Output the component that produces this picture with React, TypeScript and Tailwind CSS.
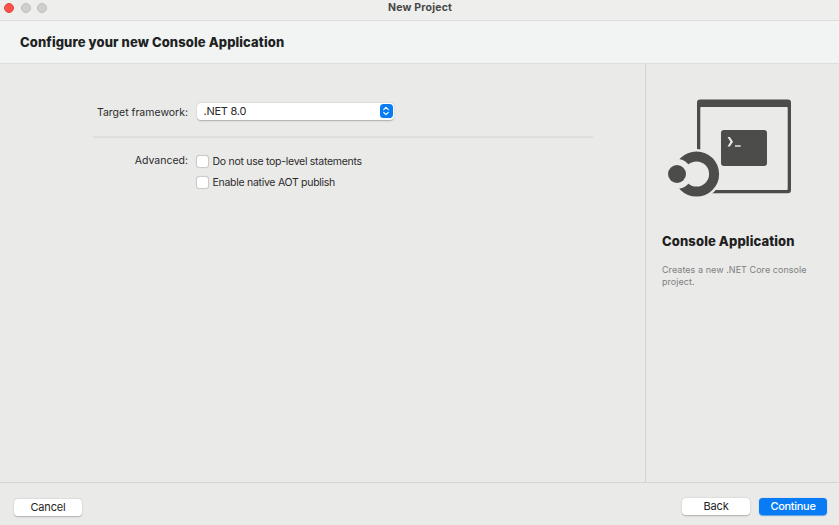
import type { ReactNode } from 'react';

function ConsoleIcon() {
  return (
    <svg className="block h-[125px] w-[193px]" viewBox="0 0 193 125" fill="none">
      <path
        fillRule="evenodd"
        fill="#4c4d4b"
        d="M54 14.5H142Q145 14.5 145 17.5V105.3Q145 108.3 142 108.3H54Q51 108.3 51 105.3V17.5Q51 14.5 54 14.5ZM55.3 22Q54.3 22 54.3 23V104Q54.3 105 55.3 105H140.7Q141.7 105 141.7 104V23Q141.7 22 140.7 22Z"
      />
      <rect x="75" y="45" width="46" height="36" rx="3" fill="#4c4d4b" />
      <path d="M81.5 52H83.8L87 56.8L83.8 61.6H81.5L84.5 56.8Z" fill="#ededeb" />
      <path d="M89 61H94.7" stroke="#ededeb" strokeWidth="1.4" />
      <circle cx="50.5" cy="89" r="25" fill="#eaeae9" />
      <circle cx="50.5" cy="89" r="17.6" stroke="#4c4d4b" strokeWidth="10" />
      <circle cx="31" cy="89" r="15" fill="#eaeae9" />
      <circle cx="31" cy="89" r="9" fill="#4c4d4b" />
    </svg>
  );
}

function Checkbox({ children }: { children: ReactNode }) {
  return (
    <label className="flex h-[21px] items-center">
      <span className="mr-[4.5px] h-[11px] w-[11px] rounded-[2.5px] bg-white shadow-[0_0_1px_0.5px_#c8c8c6]" />
      <span className="whitespace-nowrap">{children}</span>
    </label>
  );
}

function Button({ children, primary = false }: { children: ReactNode; primary?: boolean }) {
  return (
    <button
      className={`h-[17px] w-[68px] rounded-[4px] text-[11px] leading-[17px] ${
        primary
          ? 'bg-[#087bf5] font-medium tracking-[-0.3px] text-white shadow-[0_0.5px_1px_#5e9ee0]'
          : 'bg-white tracking-[-0.15px] text-[#242424] shadow-[0_0.5px_1.5px_#adadab]'
      }`}
    >
      {children}
    </button>
  );
}

export default function App() {
  return (
    <div className="flex h-[525px] w-[839px] flex-col overflow-hidden bg-[#eaeae9] font-['Inter','Liberation_Sans',sans-serif] text-[11px] text-[#2b2b2b]">
      <div className="grid h-[21px] shrink-0 grid-cols-[1fr_auto_1fr] border-b border-[#dcdddc] bg-[#eeeeec]">
        <div className="flex gap-[6.5px] pl-1 pt-[3px]">
          <span className="h-[10px] w-[10px] rounded-full border-[0.5px] border-[#e0443e] bg-[#fc534e]" />
          <span className="h-[10px] w-[10px] rounded-full border border-[#bdbdbb] bg-[#cfcfcd]" />
          <span className="h-[10px] w-[10px] rounded-full border border-[#bdbdbb] bg-[#cfcfcd]" />
        </div>
        <div className="pl-px pt-px text-[10.5px] font-bold leading-[14px] tracking-[0.2px] text-[#484847]">New Project</div>
      </div>
      <header className="flex h-[43px] shrink-0 items-center border-b border-[#dcdddc] bg-[#f1f4f3] pl-5 pt-px">
        <h1 className="text-[13px] font-extrabold tracking-[0.11px] text-[#202121]">Configure your new Console Application</h1>
      </header>
      <div className="flex min-h-0 flex-1">
        <main className="w-[645px] pt-[38px]">
          <div className="flex h-[18px] items-center">
            <div className="w-[188px] pt-[3px] text-right text-[10.5px]">Target framework:</div>
            <div className="ml-[9px] flex h-[17px] w-[197px] items-center justify-between rounded-[4px] bg-white pl-[6.5px] pr-[1.5px] shadow-[0_0.5px_1.5px_#adadab]">
              <span className="tracking-[-0.25px]">.NET 8.0</span>
              <span className="flex h-[14px] w-[13px] items-center justify-center rounded-[3.5px] bg-[#087bf5]">
                <svg className="h-[10px] w-[8px]" viewBox="0 0 8 10" fill="none" stroke="white" strokeWidth="1.2" strokeLinecap="round" strokeLinejoin="round">
                  <path d="M1.7 3.7L4 1.4L6.3 3.7M1.7 6.3L4 8.6L6.3 6.3" />
                </svg>
              </span>
            </div>
          </div>
          <div className="ml-[93px] mt-4 h-[1.5px] w-[500px] bg-[#dfdfdd]" />
          <div className="mt-[13.5px] flex">
            <div className="w-[188px] text-right text-[10.5px] leading-[20px]">Advanced:</div>
            <div className="ml-[9px] text-[10.5px] tracking-[-0.28px]">
              <Checkbox>Do not use top-level statements</Checkbox>
              <Checkbox>Enable native AOT publish</Checkbox>
            </div>
          </div>
        </main>
        <aside className="w-[194px] border-l border-[#d4d4d3] pt-[21px]">
          <ConsoleIcon />
          <div className="pl-4">
            <h2 className="mt-[21px] text-[13px] font-extrabold leading-[20px] tracking-[0.13px] text-[#202020]">Console Application</h2>
            <p className="mt-[13px] text-[9px] leading-[12px] tracking-[0.05px] text-[#80807f]">
              Creates a new .NET Core console
              <br />
              project.
            </p>
          </div>
        </aside>
      </div>
      <footer className="flex h-[43px] shrink-0 items-start border-t border-[#d4d4d3] pl-[14px] pr-3 pt-[15px]">
        <div className="pt-px">
          <Button>Cancel</Button>
        </div>
        <div className="ml-auto flex gap-[9px]">
          <Button>Back</Button>
          <Button primary>Continue</Button>
        </div>
      </footer>
    </div>
  );
}
